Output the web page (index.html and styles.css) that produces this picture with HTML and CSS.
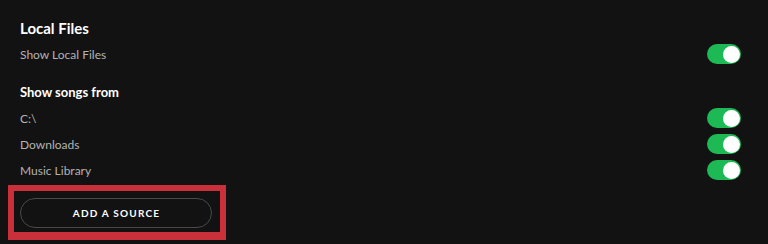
FILE: index.html
```html
<!DOCTYPE html>
<html lang="en">
<head>
<meta charset="utf-8">
<title>Local Files</title>
<link rel="stylesheet" href="styles.css">
</head>
<body>
<main class="settings">
  <section class="group">
    <h2 class="group-title">Local Files</h2>
    <div class="row">
      <span class="row-label">Show Local Files</span>
      <span class="toggle on"><span class="knob"></span></span>
    </div>
  </section>
  <section class="group sources">
    <h3 class="sub-title">Show songs from</h3>
    <div class="row">
      <span class="row-label">C:\</span>
      <span class="toggle on"><span class="knob"></span></span>
    </div>
    <div class="row">
      <span class="row-label">Downloads</span>
      <span class="toggle on"><span class="knob"></span></span>
    </div>
    <div class="row">
      <span class="row-label">Music Library</span>
      <span class="toggle on"><span class="knob"></span></span>
    </div>
  </section>
  <div class="highlight">
    <button class="add-source" type="button">ADD A SOURCE</button>
  </div>
</main>
</body>
</html>
```
FILE: styles.css
```css
* { box-sizing: border-box; }
html, body {
  margin: 0;
  padding: 0;
  background: #121212;
  height: 100%;
  overflow: hidden;
}
body {
  font-family: Lato, "Open Sans", "Liberation Sans", sans-serif;
  color: #ffffff;
}
.settings {
  padding: 18px 27px 0 20px;
  display: flex;
  flex-direction: column;
}
.group-title {
  margin: 0 0 3px 0;
  font-size: 15px;
  line-height: 20px;
  font-weight: 700;
  color: #ffffff;
}
.sub-title {
  margin: 15px 0 3px 0;
  font-size: 13px;
  line-height: 20px;
  font-weight: 700;
  color: #ffffff;
}
.row {
  height: 26px;
  display: flex;
  align-items: center;
  justify-content: space-between;
}
.row-label {
  font-size: 12px;
  color: #b3b3b3;
}
.toggle {
  width: 34px;
  height: 20px;
  border-radius: 10px;
  background: #535353;
  display: flex;
  align-items: center;
  padding: 0 1px;
}
.toggle.on {
  background: #1db954;
  justify-content: flex-end;
}
.knob {
  width: 17px;
  height: 17px;
  border-radius: 50%;
  background: #ffffff;
}
.highlight {
  margin: 2px 0 0 -12px;
  width: 218px;
  border: 6px solid #c9303a;
  border-bottom-width: 8px;
  padding: 7px 8px 4px 6px;
  display: flex;
}
.add-source {
  width: 192px;
  height: 30px;
  border-radius: 15px;
  border: 1px solid #4a4a4a;
  background: #121212;
  color: #ffffff;
  font-family: Lato, "Open Sans", "Liberation Sans", sans-serif;
  font-size: 10px;
  font-weight: 700;
  letter-spacing: 1.2px;
  padding: 0 0 0 1px;
}
```
